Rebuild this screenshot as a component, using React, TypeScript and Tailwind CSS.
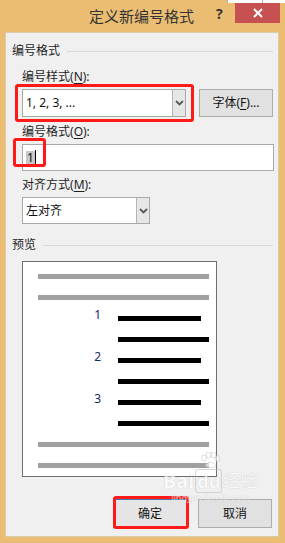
// 定义新编号格式 dialog (Windows 8 style)
const FONT = { fontFamily: "'Noto Sans', 'Noto Sans CJK SC', sans-serif" };

function Label({ text, hot, className = '' }: { text: string; hot: string; className?: string }) {
  return (
    <div className={`h-[16px] text-[12px] leading-[16px] text-[#1e1e1e] ${className}`}>
      {text}(<span className="underline underline-offset-2">{hot}</span>):
    </div>
  );
}

function Chevron() {
  return (
    <svg width="9" height="6" viewBox="0 0 9 6">
      <path d="M1 1 L4.5 4.5 L8 1" stroke="#5a5a5a" strokeWidth="1.8" fill="none" />
    </svg>
  );
}

function Select({ value, width }: { value: string; width: string }) {
  return (
    <div className={`flex h-full ${width} border border-[#a9a9a9] bg-white`}>
      <div className="flex flex-1 items-center pl-[3px] text-[12px] text-[#111]">{value}</div>
      <div className="flex w-[13px] items-center justify-center border-l border-[#b4b4b4] bg-[#e6e6e6]">
        <Chevron />
      </div>
    </div>
  );
}

function GroupHeader({ title, className = '' }: { title: string; className?: string }) {
  return (
    <div className={`flex h-[16px] items-center gap-[7px] ${className}`}>
      <span className="text-[12px] leading-[16px] text-[#1e1e1e]">{title}</span>
      <span className="h-px flex-1 bg-[#d8d8d8]" />
    </div>
  );
}

function Bar({ color, short }: { color: string; short?: boolean }) {
  return <div className={`h-[5px] ${short ? 'w-[83px]' : 'w-[91px]'} ${color}`} />;
}

function Preview() {
  const rows: { kind: 'gray' | 'black'; num?: string; short?: boolean }[] = [
    { kind: 'gray' },
    { kind: 'gray' },
    { kind: 'black', num: '1', short: true },
    { kind: 'black' },
    { kind: 'black', num: '2', short: true },
    { kind: 'black' },
    { kind: 'black', num: '3', short: true },
    { kind: 'black' },
    { kind: 'gray' },
    { kind: 'gray' },
  ];
  return (
    <div className="ml-[16px] mt-[8px] flex h-[216px] w-[195px] flex-col gap-[16px] border border-[#6e6e6e] bg-white pt-[12px]">
      {rows.map((r, i) =>
        r.kind === 'gray' ? (
          <div key={i} className="ml-[15px] h-[5px] w-[171px] bg-[#a0a0a0]" />
        ) : (
          <div key={i} className="flex h-[5px] items-center">
            <div className="relative -top-[4px] w-[95px] pr-[17px] text-right text-[12px] leading-[12px] text-[#14286a]">
              {r.num ?? ''}
            </div>
            <Bar color="bg-black" short={r.short} />
          </div>
        ),
      )}
    </div>
  );
}

function Watermark() {
  return (
    <div className="pointer-events-none absolute left-[163px] top-[452px] flex flex-col items-center opacity-60">
      <svg width="22" height="16" viewBox="0 0 22 16" className="mb-[1px]">
        <g fill="#ffffff" stroke="#b8b8b8" strokeWidth="0.8">
          <ellipse cx="5" cy="6" rx="2.4" ry="3" />
          <ellipse cx="9.5" cy="3" rx="2.4" ry="3" />
          <ellipse cx="14.5" cy="3" rx="2.4" ry="3" />
          <ellipse cx="18.5" cy="6.5" rx="2.4" ry="3" />
          <path d="M6 14 C7 9, 15 9, 17 14 C15 16, 8 16, 6 14 Z" />
        </g>
      </svg>
      <div className="flex items-center text-[20px] font-bold leading-[22px] text-white [text-shadow:0_0_1px_#9a9a9a]">
        Bai
        <span className="mx-[1px] rounded-[3px] border border-[#bdbdbd] px-[1px] text-[18px]">du</span>
        <span className="text-[17px] font-normal">经验</span>
      </div>
      <div className="text-[9px] leading-[10px] text-white [text-shadow:0_0_1px_#9a9a9a]">jingyan.baidu.com</div>
    </div>
  );
}

export default function App() {
  return (
    <div className="relative flex h-[543px] w-[285px] flex-col overflow-hidden bg-[#ebbd72]" style={FONT}>
      {/* top strip */}
      <div className="absolute right-0 top-0 flex h-[3px] w-[58px] bg-white">
        <span className="h-full w-px bg-[#b0b0b0]" />
        <span className="ml-[34px] h-full w-px bg-[#b0b0b0]" />
      </div>

      {/* title bar */}
      <div className="relative flex h-[32px] items-center justify-center">
        <span className="pr-[2px] pt-[1px] text-[15px] text-[#333]">定义新编号格式</span>
        <span className="absolute left-[216px] top-[3px] text-[14px] font-bold text-[#333]">?</span>
        <div className="absolute left-[235px] top-[3px] flex h-[20px] w-[45px] items-center justify-center bg-[#c75050]">
          <svg width="10" height="10" viewBox="0 0 10 10">
            <path d="M1 1 L9 9 M9 1 L1 9" stroke="#fff" strokeWidth="2" />
          </svg>
        </div>
      </div>

      {/* body */}
      <div className="relative ml-[5px] mr-[6px] flex h-[505px] flex-col border border-[#d9cba8] bg-[#f0f0f0] pl-[6px] pr-[5px]">
        <GroupHeader title="编号格式" className="mt-[10px]" />
        <Label text="编号样式" hot="N" className="ml-[10px] mt-[10px]" />
        <div className="ml-[10px] mt-[4px] flex h-[28px] gap-[13px]">
          <Select value="1, 2, 3, ..." width="w-[164px]" />
          <button className="h-[28px] w-[74px] border border-[#adadad] bg-[#e1e1e1] text-[12px] text-[#111]">
            字体(<span className="underline underline-offset-2">F</span>)...
          </button>
        </div>
        <Label text="编号格式" hot="O" className="ml-[10px] mt-[7px]" />
        <div className="ml-[10px] mt-[4px] flex h-[27px] w-[252px] items-center border border-[#a9a9a9] bg-white pl-[3px]">
          <span className="bg-[#c8c8c8] px-[1px] text-[12px] leading-[14px] text-[#111]">1</span>
          <span className="h-[15px] w-px bg-black" />
        </div>
        <Label text="对齐方式" hot="M" className="ml-[10px] mt-[6px]" />
        <div className="ml-[10px] mt-[4px] h-[27px]">
          <Select value="左对齐" width="w-[128px]" />
        </div>
        <GroupHeader title="预览" className="mt-[13px]" />
        <div className="-ml-[6px]">
          <Preview />
        </div>
        <div className="mt-[22px] flex justify-end gap-[11px] pr-[1px]">
          <button className="h-[29px] w-[74px] border border-[#3c7fb1] bg-[#e5e5e5] text-[12px] text-[#111]">确定</button>
          <button className="h-[29px] w-[74px] border border-[#adadad] bg-[#e1e1e1] text-[12px] text-[#111]">取消</button>
        </div>

        {/* red annotation boxes */}
        <div className="pointer-events-none absolute left-[9px] top-[51px] h-[38px] w-[179px] rounded-[3px] border-[3px] border-[#ff1a1a]" />
        <div className="pointer-events-none absolute left-[7px] top-[105px] h-[29px] w-[33px] rounded-[3px] border-[3px] border-[#ff1a1a]" />
        <div className="pointer-events-none absolute left-[107px] top-[463px] h-[33px] w-[76px] rounded-[3px] border-[3px] border-[#ff1a1a]" />
      </div>

      <Watermark />
    </div>
  );
}
